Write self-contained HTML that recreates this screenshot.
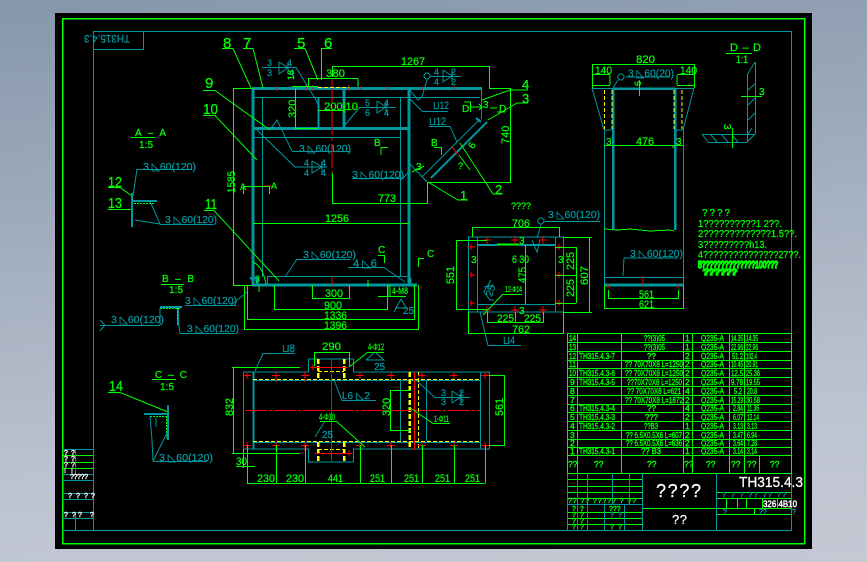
<!DOCTYPE html>
<html><head><meta charset="utf-8"><style>
html,body{margin:0;padding:0;width:867px;height:562px;overflow:hidden;background:linear-gradient(174deg,#8697ab 0%,#bcc3d0 75%,#c6c9d4 100%)}
#c{position:absolute;left:55px;top:13px;width:757px;height:536px;background:#000}
svg{position:absolute;left:0;top:0}
text{font-family:"Liberation Sans",sans-serif;font-size:11px;stroke-width:.25}
.g{fill:#0f0;stroke:#0f0}.t{fill:#00979e;stroke:#00979e}.w{fill:#fff;stroke:#fff}
.gl path,.gl line,.gl polyline{stroke:#0f0;fill:none;stroke-width:1}
.tl path{stroke:#00979e;fill:none;stroke-width:1}
.k path{stroke:#00979e;fill:none;stroke-width:3}
.r path{stroke:#f00;fill:none;stroke-width:1}
.y path{stroke:#ff0;fill:none;stroke-width:1;stroke-dasharray:4 2}
.yk path{stroke:#ff0;fill:none;stroke-width:2.5;stroke-dasharray:5 2}
.s text{font-size:8.5px;stroke-width:.4}.m text{font-size:9px}
.n{font-size:15px}
</style></head><body><div id="c"></div>
<svg width="867" height="562" viewBox="0 0 867 562" shape-rendering="crispEdges">
<g class="gl"><path d="M62.5 18.5H804.5V543.5H62.5Z" style="stroke-width:1.5"/></g>
<g class="tl"><path d="M93.5 31.5H791.5V530.5H93.5ZM93 49.5H143.5V31"/></g>
<text class="t" transform="rotate(180 107 39)" x="84" y="43" textLength="46" lengthAdjust="spacingAndGlyphs">TH315.4.3</text>

<!-- main elevation thick -->
<g class="k">
<path d="M253 88V285M409 88V285M252 88.5H482M253 128.5H409M252 285H417M344 88V128"/>
<path d="M431 178L487 122" style="stroke-width:2" shape-rendering="auto"/>
<path d="M476 118L481 122" style="stroke-width:2"/>
<path d="M318.5 97V128" style="stroke-width:2"/>
<path d="M250 278H257V285M410 278V285" style="stroke-width:2.5"/>
</g>
<g class="tl">
<path d="M253 97.5H480M262.5 97V277M253 137.5H400M400.5 97V277M267 276.5H407M267.5 276V285"/>
<path d="M481.5 88V119M422 177L480 119M410 164L427 182" shape-rendering="auto"/>
<path d="M262 67.500H296L316 100L318 105M279 62V74L288 67.500L279 62M288 62V74" shape-rendering="auto"/>
<path d="M360 107.500H396M360 107L345 125M377 101V113L386 107L377 101M386 101V113" shape-rendering="auto"/>
<path d="M430 76.500H461M427 80L422 97L418 100L410 90M443 70V82L452 76L443 70M452 70V82" shape-rendering="auto"/>
<circle cx="427" cy="76" r="3" fill="none" stroke="#00979e"/>
<path d="M422 111.500H448M422 111L408 97M429 126.500H450L457 142" shape-rendering="auto"/>
<path d="M352 178.500H403L410 170" shape-rendering="auto"/>
<path d="M292 151.500H350M292 151L277 120L270 130" shape-rendering="auto"/>
<path d="M257 130L295 167H327M312 161V173L322 167L312 161M322 161V173" shape-rendering="auto"/>
<path d="M297 259.500H350M297 259L285 277" shape-rendering="auto"/>
<path d="M348 267.500H384L405 282" shape-rendering="auto"/>
<path d="M401 299L394 312M401 299L406 308H395" shape-rendering="auto"/>
</g>
<text class="t" x="299" y="152" textLength="52" lengthAdjust="spacingAndGlyphs" style="font-size:10.500px">3 ◺60(120)</text>
<text class="t" x="352" y="178" textLength="52" lengthAdjust="spacingAndGlyphs" style="font-size:10.500px">3 ◺60(120)</text>
<text class="t" x="303" y="258" textLength="53" lengthAdjust="spacingAndGlyphs" style="font-size:10.500px">3 ◺60(120)</text>
<text class="t" x="353" y="267" textLength="24" lengthAdjust="spacingAndGlyphs">4 ◺6</text>
<text class="t" x="433" y="109" textLength="16" lengthAdjust="spacingAndGlyphs">⊔12</text>
<text class="t" x="429" y="125" textLength="17" lengthAdjust="spacingAndGlyphs">⊔12</text>
<g class="m">
<text class="t" x="267" y="66">3</text><text class="t" x="267" y="76">3</text><text class="t" x="287" y="66">4</text><text class="t" x="289" y="76">4</text>
<text class="t" x="365" y="106">5</text><text class="t" x="365" y="116">6</text><text class="t" x="384" y="106">4</text><text class="t" x="384" y="116">4</text>
<text class="t" x="434" y="75">4</text><text class="t" x="434" y="85">4</text><text class="t" x="451" y="75">2</text><text class="t" x="451" y="85">2</text>
<text class="t" x="304" y="166">4</text><text class="t" x="304" y="176">4</text><text class="t" x="321" y="166">4</text><text class="t" x="321" y="176">4</text>
</g>
<text class="t" x="403" y="314" style="font-size:10px">25</text>

<g class="r">
<path d="M332 78V173" style="stroke-dasharray:24 3 3 3"/>
<path d="M277 86V91M306 85V91M313 85V91M349 85V91M361 86V90M387 86V90M422 86V90M454 86V90"/>
<path d="M262 186H272M332 276V285M421 286V289M247 286V289M274 286V289M312 286V289M349 286V289M414 286V289"/>
<path d="M452 147L458 155" shape-rendering="auto"/>
</g>
<path d="M292 86.500H318" stroke="#0f0"/>
<g class="y"><path d="M318 87.500H349"/></g>
<text class="g n" x="223" y="48">8</text>
<text class="g n" x="243" y="48">7</text>
<text class="g n" x="297" y="48">5</text>
<text class="g n" x="324" y="48">6</text>
<text class="g n" x="205" y="88">9</text>
<text class="g n" x="203" y="114" textLength="15" lengthAdjust="spacingAndGlyphs">10</text>
<text class="g n" x="205" y="209" textLength="12" lengthAdjust="spacingAndGlyphs">11</text>
<text class="g n" x="108" y="187" textLength="14" lengthAdjust="spacingAndGlyphs">12</text>
<text class="g n" x="108" y="208" textLength="14" lengthAdjust="spacingAndGlyphs">13</text>
<text class="g n" x="109" y="391" textLength="14" lengthAdjust="spacingAndGlyphs">14</text>
<text class="g" x="522" y="89" style="font-size:13px">4</text>
<text class="g" x="522" y="103" style="font-size:13px">3</text>
<text class="g" x="495" y="194" style="font-size:13px">2</text>
<text class="g" x="460" y="200" style="font-size:13px">1</text>
<g class="gl">
<path d="M222 48.500H233L251 88M243 48.500H253L263 88M294 48.500H305L318 80M322 48.500H332M321.500 48V80M203 90.500H215L270 130M203 115.500H215L257 160M204 210.500H214L279 281M108 187.500H120L132 196M108 209.500H132M108 392.500H120L168 412" shape-rendering="auto"/>
<path d="M482 100L510 90H528M488 120L517 103H528M460 143L493 194H503M428 182L458 200H468" shape-rendering="auto"/>
<path d="M233.500 88V285M233 88.500H253M233 285.500H252M295.500 88V128M295 128.500H318M318 110.500H344"/>
<path d="M308.500 78V87M308 78.500H358V87M332.500 66V77M332 66.500H489.500V88M510.500 88V182M489 88.500H511M427 182.500H511"/>
<path d="M332.500 173V204M332 203.500H427.500M427.500 183V204M253 223.500H409"/>
<path d="M312.500 285V298M312 298.500H349.500V285M274.500 285V309M274 309.500H387.500V285M247.500 285V319M247 319.500H414.500V285M244.500 285V329M244 329.500H418.500V285"/>
<path d="M243 186.500H270M243.500 187V194M269.500 187V194M470 107H482M470.500 102V112M479 104L482 107L479 110" />
<path d="M388 285V297M390 285V297M378 296.500H406M368 280V287"/>
<path d="M381 147V155M381 147.500H388M434 147.500H441M441.500 147V155M378 255.500H384M384.500 255V263M424 258.500H418M418.500 258V267"/>
<path d="M253 262C260 265 265 275 266 285M259 285V292M471 102H464M497 112H505M497 108H490" shape-rendering="auto"/>
<path d="M459 155L470 170M412 172L424 166" shape-rendering="auto"/>
</g>
<text class="g" transform="rotate(-90 231 182)" x="220" y="186" textLength="22" lengthAdjust="spacingAndGlyphs">1585</text>
<text class="g" transform="rotate(-90 292 108)" x="282" y="112" style="font-size:11px">320</text>
<text class="g" transform="rotate(-90 291 75)" x="286" y="78" style="font-size:9px">18</text>
<text class="g" x="326" y="77" textLength="19" lengthAdjust="spacingAndGlyphs">380</text>
<text class="g" x="324" y="110" textLength="34" lengthAdjust="spacingAndGlyphs">200|10</text>
<text class="g" x="401" y="65" textLength="24" lengthAdjust="spacingAndGlyphs">1267</text>
<text class="g" transform="rotate(-90 505 134)" x="495" y="138">740</text>
<text class="g" x="378" y="202" textLength="18" lengthAdjust="spacingAndGlyphs">773</text>
<text class="g" x="325" y="222" textLength="24" lengthAdjust="spacingAndGlyphs">1256</text>
<text class="g" x="325" y="297" textLength="18" lengthAdjust="spacingAndGlyphs">300</text>
<text class="g" x="324" y="309" textLength="18" lengthAdjust="spacingAndGlyphs">900</text>
<text class="g" x="324" y="319" textLength="23" lengthAdjust="spacingAndGlyphs">1336</text>
<text class="g" x="324" y="329" textLength="23" lengthAdjust="spacingAndGlyphs">1396</text>
<text class="g" x="392" y="294" textLength="16" lengthAdjust="spacingAndGlyphs" style="font-size:9px">4-M8</text>
<text class="g" x="240" y="190" style="font-size:9px">A</text><text class="g" x="271" y="189" style="font-size:9px">A</text>
<text class="g" x="374" y="146" style="font-size:10px">B</text><text class="g" x="431" y="146" style="font-size:10px">B</text>
<text class="g" x="378" y="253" style="font-size:10px">C</text><text class="g" x="427" y="257" style="font-size:10px">C</text>
<text class="g" x="462" y="112" style="font-size:10px">D</text><text class="g" x="499" y="112" style="font-size:10px">D</text>
<text class="g" x="483" y="108" style="font-size:10px">3</text><text class="g" x="416" y="170" style="font-size:10px">3</text>
<text class="g" transform="rotate(-60 472 144)" x="468" y="148" style="font-size:10px">6</text>
<text class="g" x="458" y="169" style="font-size:9px">?</text>
<text class="g" x="255" y="282" style="font-size:9px">3</text>

<!-- right view -->
<g class="k">
<path d="M613 88.500H675M613 88V230M675 88V230" style="stroke-width:2.5"/>
<path d="M604 285H683" />
</g>
<g class="tl">
<path d="M592 88.500H694M604.500 130V285M683.500 130V285M604 130H613M675 130H683M604 277.500H683"/>
<path d="M592 88L604 130M694 88L683 130M626 77H670M618 80L613 88M624 258H678M624 258L623 276" shape-rendering="auto"/>
<circle cx="621" cy="77" r="3" fill="none" stroke="#00979e"/>
<path d="M755.500 62V134M747.500 75V142M747 75L755 62M702 134.500H755M708 142.500H747M702 134L708 142M747 142L755 134M748 90L755 84M748 105L755 98M748 120L755 113M711 135L717 142M722 135L728 142M732 135L738 142M748 134L752 128" shape-rendering="auto"/>
</g>
<g class="y"><path d="M604.500 90V129M612 90V129M674 90V129M682 90V129"/></g>
<path d="M604 229L618 230L630 229L650 231L670 230L674 231" fill="none" stroke="#0f0"/>
<path d="M643 276V285M608 284V288M678 284V288" stroke="#f00"/>
<g class="gl">
<path d="M592.500 64V88M592 64.500H694.500V88M592.500 74.500H610M610 75V85M592 85.500H610M677 75V85M677 85.500H694M677.500 74.500H694"/>
<path d="M604 145.500H683M608.500 290V299M608 298.500H678.500V290M604.500 285V308M604 308.500H683.500V285"/>
<path d="M639.500 80V96M741 96.500H762M732.500 128V148"/>
<path d="M726 53.500H752"/>
<path d="M673 145V148"/>
</g>
<text class="g" x="636" y="63" textLength="19" lengthAdjust="spacingAndGlyphs">820</text>
<text class="g" x="595" y="74" textLength="17" lengthAdjust="spacingAndGlyphs">140</text>
<text class="g" x="680" y="74" textLength="17" lengthAdjust="spacingAndGlyphs">140</text>
<text class="g" x="636" y="145" textLength="18" lengthAdjust="spacingAndGlyphs">476</text>
<text class="g" x="606" y="145" style="font-size:10px">3</text>
<text class="g" x="676" y="145" style="font-size:10px">3</text>
<text class="g" x="639" y="298" textLength="15" lengthAdjust="spacingAndGlyphs">561</text>
<text class="g" x="639" y="308" textLength="15" lengthAdjust="spacingAndGlyphs">621</text>
<text class="t" x="628" y="77" textLength="46" lengthAdjust="spacingAndGlyphs">3 ◺60(20)</text>
<text class="t" x="630" y="257" textLength="53" lengthAdjust="spacingAndGlyphs" style="font-size:10.500px">3 ◺60(120)</text>
<text class="g" transform="rotate(-90 637 82)" x="633" y="86" style="font-size:9px">6</text>
<text class="g" x="730" y="51" textLength="31" lengthAdjust="spacing">D – D</text>
<text class="g" x="736" y="63" textLength="12" lengthAdjust="spacingAndGlyphs">1:1</text>
<text class="g" x="759" y="95" style="font-size:10px">3</text>
<text class="g" transform="rotate(90 727 128)" x="723" y="131" style="font-size:10px">3</text>

<!-- notes -->
<text class="g" x="702" y="216" textLength="28" lengthAdjust="spacing" style="font-size:10px">????</text>
<text class="g" x="698" y="227" textLength="84" lengthAdjust="spacingAndGlyphs" style="font-size:10px">1??????????1 2??.</text>
<text class="g" x="698" y="237" textLength="99" lengthAdjust="spacingAndGlyphs" style="font-size:10px">2?????????????1.5??.</text>
<text class="g" x="698" y="248" textLength="69" lengthAdjust="spacingAndGlyphs" style="font-size:10px">3?????????h13.</text>
<text class="g" x="698" y="258" textLength="103" lengthAdjust="spacingAndGlyphs" style="font-size:10px">4???????????????27??.</text>
<text class="g" x="698" y="268" textLength="80" lengthAdjust="spacingAndGlyphs" style="font-size:10px;stroke-width:1.6">5??????????????100???</text>
<text class="g" x="703" y="275" textLength="34" lengthAdjust="spacingAndGlyphs" style="font-size:8px;stroke-width:1.6">??????</text>

<!-- plan -->
<g class="tl">
<path d="M468.500 237H563.500V312H468.500ZM477.500 237V312M555.500 237V312M477 304.500H555"/>
<path d="M532 240L537 252L540 240M541 225L537 238M545 221.500H600M480 312L488 345.500H521" shape-rendering="auto"/>
<circle cx="541" cy="221" r="3" fill="none" stroke="#00979e"/>
<path d="M491 280L484 292L490 300H494M484 287L494 285" shape-rendering="auto"/>
</g>
<g class="k"><path d="M477 245H497M519 245H555" style="stroke-width:2"/></g>
<path d="M497 244.500H519" stroke="#0f0" stroke-width="2"/>
<g class="r">
<path d="M483 240H491M487 236V244M511 240H519M515 236V244M539 240H547M543 236V244M467 247H475M471 244V250M467 275H475M471 272V278M467 303H475M471 300V306M555 247H563M559 244V250M555 275H563M559 272V278M555 303H563M559 300V306M483 310H491M487 306V314M511 310H519M515 306V314M539 310H547M543 306V314"/>
</g>
<g class="gl">
<path d="M472.500 227V237M472 227.500H559.500V237M468.500 312V333M468 333.500H563.500V312M487.500 312V322M487 322.500H543.500V312M515.500 312V322"/>
<path d="M456.500 240V309M456 240.500H487M456 309.500H487M589.500 237V312M563 237.500H592M563 312.500H592M576.500 247V303M555 247.500H576M555 275.500H576M555 303.500H576M525.500 245V304"/>
<path d="M503 294.500H522M503 294L483 315" shape-rendering="auto"/>
</g>
<text class="g" x="511" y="209" textLength="20" lengthAdjust="spacing" style="font-size:9px">????</text>
<text class="g" x="512" y="227" textLength="18" lengthAdjust="spacingAndGlyphs">706</text>
<text class="g" x="512" y="333" textLength="18" lengthAdjust="spacingAndGlyphs">762</text>
<text class="g" x="497" y="322" textLength="17" lengthAdjust="spacingAndGlyphs">225</text>
<text class="g" x="524" y="322" textLength="17" lengthAdjust="spacingAndGlyphs">225</text>
<text class="g" x="512" y="263" textLength="17" lengthAdjust="spacingAndGlyphs">6 30</text>
<text class="g" transform="rotate(-90 522 275)" x="514" y="279" textLength="16" lengthAdjust="spacingAndGlyphs">475</text>
<text class="g" transform="rotate(-90 450 275)" x="441" y="279" textLength="18" lengthAdjust="spacingAndGlyphs">551</text>
<text class="g" transform="rotate(-90 584 275)" x="574" y="279" textLength="19" lengthAdjust="spacingAndGlyphs">607</text>
<text class="g" transform="rotate(-90 570 261)" x="561" y="265" textLength="18" lengthAdjust="spacingAndGlyphs">225</text>
<text class="g" transform="rotate(-90 570 288)" x="561" y="292" textLength="18" lengthAdjust="spacingAndGlyphs">225</text>
<text class="g" x="471" y="263" style="font-size:10px">3</text><text class="g" x="558" y="263" style="font-size:10px">3</text>
<text class="g" x="519" y="244" style="font-size:10px">3</text><text class="g" x="519" y="314" style="font-size:10px">3</text>
<text class="g" x="505" y="292" textLength="17" lengthAdjust="spacingAndGlyphs" style="font-size:8px">12-Φ14</text>
<text class="t" x="548" y="218" textLength="52" lengthAdjust="spacingAndGlyphs" style="font-size:10.500px">3 ◺60(120)</text>
<text class="t" transform="rotate(-70 490 290)" x="484" y="294" style="font-size:10px">25</text>
<text class="t" x="503" y="344" textLength="12" lengthAdjust="spacingAndGlyphs">⊔4</text>

<!-- sections -->
<text class="g" x="135" y="136" textLength="31" lengthAdjust="spacing" style="font-size:10px">A – A</text>
<path d="M131 137.500H155" stroke="#0f0"/>
<text class="g" x="139" y="148" textLength="14" lengthAdjust="spacing" style="font-size:10px">1:5</text>
<g class="k"><path d="M132 193V227" style="stroke-width:2"/><path d="M132 201H157" style="stroke-width:2"/></g>
<path d="M134 203.500H155" stroke="#0f0" stroke-dasharray="2 1"/>
<g class="tl"><path d="M137 169.500H192M137 169L133 196M135 220L160 224M150 201L160 224M160 224.500H213" shape-rendering="auto"/></g>
<text class="t" x="143" y="170" textLength="53" lengthAdjust="spacingAndGlyphs" style="font-size:10.500px">3 ◺60(120)</text>
<text class="t" x="165" y="223" textLength="52" lengthAdjust="spacingAndGlyphs" style="font-size:10.500px">3 ◺60(120)</text>
<text class="g" x="162" y="282" textLength="32" lengthAdjust="spacing" style="font-size:10px">B – B</text>
<path d="M161 284.500H184" stroke="#0f0"/>
<text class="g" x="169" y="293" textLength="14" lengthAdjust="spacing" style="font-size:10px">1:5</text>
<g class="k"><path d="M160 307H182M178 307V325" style="stroke-width:2"/></g>
<path d="M160 308.500H180M177.500 308V325" stroke="#0f0" stroke-dasharray="2 1"/>
<g class="tl"><path d="M185 305.500H236M247 292L230 306M100 325.500H160M160 325L160 308M180 333.500H235M180 333L178 320M100 320L105 325L100 331" shape-rendering="auto"/></g>
<text class="t" x="185" y="304" textLength="52" lengthAdjust="spacingAndGlyphs" style="font-size:10.500px">3 ◺60(120)</text>
<text class="t" x="111" y="323" textLength="53" lengthAdjust="spacingAndGlyphs" style="font-size:10.500px">3 ◺60(120)</text>
<text class="t" x="187" y="332" textLength="52" lengthAdjust="spacingAndGlyphs" style="font-size:10.500px">3 ◺60(120)</text>
<text class="g" x="155" y="378" textLength="32" lengthAdjust="spacing" style="font-size:10px">C – C</text>
<path d="M152 379.500H176" stroke="#0f0"/>
<text class="g" x="160" y="390" textLength="14" lengthAdjust="spacing" style="font-size:10px">1:5</text>
<g class="k"><path d="M168 405V440M144 414H168" style="stroke-width:2"/></g>
<path d="M150 416.500H166M166.500 416V438" stroke="#0f0" stroke-dasharray="2 1"/>
<g class="tl"><path d="M150 416L152 440L153 461M153 461L168 431M153 461.500H207M156 418V427" shape-rendering="auto"/></g>
<text class="t" x="159" y="461" textLength="54" lengthAdjust="spacingAndGlyphs" style="font-size:10.500px">3 ◺60(120)</text>

<!-- bottom plan -->
<g class="tl">
<path d="M243.500 372H308.500V359H353.500V372H489.500V449H353.500V462H308.500V449H243.500ZM253 380.500H480M253 442.500H480M480.500 372V449M400.500 380V441M426.500 380V441"/>
<path d="M255 371L263 353.500H295M334 380L342 400.500H376M416 380L435 397.500H470M375 352L366 360M375 352L384 360H366M325 421L315 437" shape-rendering="auto"/>
<path d="M452 391V403L461 397L452 391M461 391V403" shape-rendering="auto"/>
</g>
<path d="M253.500 372V449" stroke="#00979e" stroke-width="2"/>
<g class="y"><path d="M253 379.500H480M253 441.500H480M318 371.500H344M318 449.500H344M418.500 372V449"/></g>
<g class="yk"><path d="M318 359V378M318 442V462M344 359V378M344 442V462M409.500 372V449"/></g>
<g class="r">
<path d="M245 410.500H480" style="stroke-dasharray:22 2 3 2"/>
<path d="M331.500 359V462M414.500 372V450" />
<path d="M315 367.500H348M315 453.500H348"/>
<path d="M243 375.500H251M247 372V379M272 375.500H280M276 371V382M301 375.500H309M305 371V382M356 375.500H364M360 372V379M387 375.500H395M391 372V379M418 375.500H426M422 372V379M450 375.500H458M454 372V379M481 375.500H489M485 372V379"/>
<path d="M243 445.500H251M247 442V449M272 445.500H280M276 442V451M301 445.500H309M305 442V451M356 445.500H364M360 442V449M387 445.500H395M391 442V449M418 445.500H426M422 442V449M450 445.500H458M454 442V449M481 445.500H489M485 442V449"/>
<path d="M313 364V370M310 367.500H316M349 450V456M346 453.500H352"/>
</g>
<g class="gl">
<path d="M233.500 367V453M232 367.500H300M232 453.500H300M314.500 352V366M314 352.500H349.500V366M489 375.500H504.500V445.500H489M390.500 390V430M390 390.500H411M390 430.500H411"/>
<path d="M247.500 445V483M247 483.500H485.500M276.500 445V483M305.500 445V483M360.500 445V483M391.500 445V483M422.500 445V483M454.500 445V483M485.500 445V483M236 466.500H255M243.500 449V468"/>
<path d="M349 367L368 352M368 352.500H384M409 407L433 423.500H450M336 421L365 447M320 421.500H336" shape-rendering="auto"/>
</g>
<text class="t" x="282" y="352" textLength="13" lengthAdjust="spacingAndGlyphs">⊔8</text>
<text class="g" x="322" y="350" textLength="19" lengthAdjust="spacingAndGlyphs">290</text>
<text class="g" x="368" y="350" textLength="16" lengthAdjust="spacingAndGlyphs" style="font-size:9px">4-Φ12</text>
<text class="t" x="374" y="370" style="font-size:10px">25</text>
<text class="t" x="342" y="399" textLength="11" lengthAdjust="spacingAndGlyphs" style="font-size:10px">L6</text>
<text class="t" x="356" y="399" textLength="14" lengthAdjust="spacingAndGlyphs" style="font-size:10px">◺2</text>
<g class="m"><text class="t" x="441" y="396">3</text><text class="t" x="441" y="405">3</text><text class="t" x="459" y="396">2</text><text class="t" x="459" y="405">2</text></g>
<text class="g" x="434" y="422" textLength="15" lengthAdjust="spacingAndGlyphs" style="font-size:9px">1-Φ11</text>
<text class="g" x="319" y="420" textLength="16" lengthAdjust="spacingAndGlyphs" style="font-size:9px">4-Φ10</text>
<text class="t" x="322" y="438" style="font-size:10px">25</text>
<text class="g" transform="rotate(-90 229 407)" x="220" y="411" textLength="18" lengthAdjust="spacingAndGlyphs">832</text>
<text class="g" transform="rotate(-90 386 407)" x="377" y="411" textLength="18" lengthAdjust="spacingAndGlyphs">320</text>
<text class="g" transform="rotate(-90 499 407)" x="490" y="411" textLength="18" lengthAdjust="spacingAndGlyphs">561</text>
<text class="g" x="236" y="465" textLength="11" lengthAdjust="spacingAndGlyphs">30</text>
<text class="g" x="257" y="482" textLength="18" lengthAdjust="spacingAndGlyphs">230</text>
<text class="g" x="286" y="482" textLength="18" lengthAdjust="spacingAndGlyphs">230</text>
<text class="g" x="328" y="482" textLength="15" lengthAdjust="spacingAndGlyphs">441</text>
<text class="g" x="370" y="482" textLength="15" lengthAdjust="spacingAndGlyphs">251</text>
<text class="g" x="404" y="482" textLength="15" lengthAdjust="spacingAndGlyphs">251</text>
<text class="g" x="435" y="482" textLength="15" lengthAdjust="spacingAndGlyphs">251</text>
<text class="g" x="465" y="482" textLength="15" lengthAdjust="spacingAndGlyphs">251</text>

<!-- parts table -->
<g class="gl">
<path d="M567.500 333.500H791.500V473.500H567.500ZM567 342.500H791M567 351.500H791M567 360.500H791M567 368.500H791M567 377.500H791M567 386.500H791M567 395.500H791M567 404.500H791M567 412.500H791M567 421.500H791M567 430.500H791M567 439.500H791M567 447.500H791M567 455.500H791"/>
<path d="M577.500 333V473M621.500 333V473M683.500 333V473M692.500 333V473M729.500 333V473M744.500 333V473M759.500 455V473"/>
</g>
<g class="s">
<text class="g" x="569" y="341" textLength="7" lengthAdjust="spacingAndGlyphs">14</text><text class="g" x="569" y="350" textLength="7" lengthAdjust="spacingAndGlyphs">13</text><text class="g" x="569" y="359" textLength="7" lengthAdjust="spacingAndGlyphs">12</text><text class="g" x="569" y="367" textLength="7" lengthAdjust="spacingAndGlyphs">11</text><text class="g" x="569" y="376" textLength="7" lengthAdjust="spacingAndGlyphs">10</text><text class="g" x="570" y="385">9</text><text class="g" x="570" y="394">8</text><text class="g" x="570" y="403">7</text><text class="g" x="570" y="411">6</text><text class="g" x="570" y="420">5</text><text class="g" x="570" y="429">4</text><text class="g" x="570" y="438">3</text><text class="g" x="570" y="446">2</text><text class="g" x="570" y="454">1</text>
<text class="g" x="579" y="359" textLength="36" lengthAdjust="spacingAndGlyphs">TH315.4.3-7</text><text class="g" x="579" y="376" textLength="36" lengthAdjust="spacingAndGlyphs">TH315.4.3-6</text><text class="g" x="579" y="385" textLength="36" lengthAdjust="spacingAndGlyphs">TH315.4.3-5</text><text class="g" x="579" y="411" textLength="36" lengthAdjust="spacingAndGlyphs">TH315.4.3-4</text><text class="g" x="579" y="420" textLength="36" lengthAdjust="spacingAndGlyphs">TH315.4.3-3</text><text class="g" x="579" y="429" textLength="36" lengthAdjust="spacingAndGlyphs">TH315.4.3-2</text><text class="g" x="579" y="454" textLength="36" lengthAdjust="spacingAndGlyphs">TH315.4.3-1</text>
<text class="g" x="644" y="341" textLength="21" lengthAdjust="spacingAndGlyphs">??(3)05</text><text class="g" x="644" y="350" textLength="21" lengthAdjust="spacingAndGlyphs">??(3)05</text><text class="g" x="647" y="359" textLength="9" lengthAdjust="spacingAndGlyphs">??</text>
<text class="g" x="625" y="367" textLength="58" lengthAdjust="spacingAndGlyphs">?? 70X70X8 L=1250</text><text class="g" x="625" y="376" textLength="58" lengthAdjust="spacingAndGlyphs">?? 70X70X8 L=1250</text><text class="g" x="627" y="385" textLength="55" lengthAdjust="spacingAndGlyphs">??70X70X8 L=1250</text><text class="g" x="627" y="394" textLength="54" lengthAdjust="spacingAndGlyphs">?? 70X70X8 L=621</text><text class="g" x="625" y="403" textLength="58" lengthAdjust="spacingAndGlyphs">?? 70X70X8 L=1872</text>
<text class="g" x="647" y="411" textLength="9" lengthAdjust="spacingAndGlyphs">??</text><text class="g" x="645" y="420" textLength="13" lengthAdjust="spacingAndGlyphs">???</text><text class="g" x="644" y="429" textLength="14" lengthAdjust="spacingAndGlyphs">??B3</text>
<text class="g" x="626" y="438" textLength="56" lengthAdjust="spacingAndGlyphs">?? 6.5X0.5X6 L=607</text><text class="g" x="626" y="446" textLength="56" lengthAdjust="spacingAndGlyphs">?? 6.5X0.5X6 L=636</text><text class="g" x="641" y="454" textLength="20" lengthAdjust="spacingAndGlyphs">?? B3</text>
<text class="g" x="685" y="341">1</text><text class="g" x="685" y="350">1</text><text class="g" x="685" y="359">2</text><text class="g" x="685" y="367">2</text><text class="g" x="685" y="376">2</text><text class="g" x="685" y="385">2</text><text class="g" x="685" y="394">4</text><text class="g" x="685" y="403">2</text><text class="g" x="685" y="411">4</text><text class="g" x="685" y="420">2</text><text class="g" x="685" y="429">1</text><text class="g" x="685" y="438">2</text><text class="g" x="685" y="446">2</text><text class="g" x="685" y="454">1</text>
<text class="g" x="701" y="341" textLength="23" lengthAdjust="spacingAndGlyphs">Q235-A</text><text class="g" x="701" y="350" textLength="23" lengthAdjust="spacingAndGlyphs">Q235-A</text><text class="g" x="701" y="359" textLength="23" lengthAdjust="spacingAndGlyphs">Q235-A</text><text class="g" x="701" y="367" textLength="23" lengthAdjust="spacingAndGlyphs">Q235-A</text><text class="g" x="701" y="376" textLength="23" lengthAdjust="spacingAndGlyphs">Q235-A</text><text class="g" x="701" y="385" textLength="23" lengthAdjust="spacingAndGlyphs">Q235-A</text><text class="g" x="701" y="394" textLength="23" lengthAdjust="spacingAndGlyphs">Q235-A</text><text class="g" x="701" y="403" textLength="23" lengthAdjust="spacingAndGlyphs">Q235-A</text><text class="g" x="701" y="411" textLength="23" lengthAdjust="spacingAndGlyphs">Q235-A</text><text class="g" x="701" y="420" textLength="23" lengthAdjust="spacingAndGlyphs">Q235-A</text><text class="g" x="701" y="429" textLength="23" lengthAdjust="spacingAndGlyphs">Q235-A</text><text class="g" x="701" y="438" textLength="23" lengthAdjust="spacingAndGlyphs">Q235-A</text><text class="g" x="701" y="446" textLength="23" lengthAdjust="spacingAndGlyphs">Q235-A</text><text class="g" x="701" y="454" textLength="23" lengthAdjust="spacingAndGlyphs">Q235-A</text>
<text class="g" x="731" y="341" textLength="12" lengthAdjust="spacingAndGlyphs">14.35</text><text class="g" x="731" y="350" textLength="12" lengthAdjust="spacingAndGlyphs">22.96</text><text class="g" x="732" y="359" textLength="11" lengthAdjust="spacingAndGlyphs">51.2</text><text class="g" x="731" y="367" textLength="12" lengthAdjust="spacingAndGlyphs">10.45</text><text class="g" x="731" y="376" textLength="12" lengthAdjust="spacingAndGlyphs">12.5</text><text class="g" x="731" y="385" textLength="12" lengthAdjust="spacingAndGlyphs">9.78</text><text class="g" x="734" y="394" textLength="8" lengthAdjust="spacingAndGlyphs">5.2</text><text class="g" x="731" y="403" textLength="12" lengthAdjust="spacingAndGlyphs">15.29</text><text class="g" x="733" y="411" textLength="10" lengthAdjust="spacingAndGlyphs">2.84</text><text class="g" x="733" y="420" textLength="10" lengthAdjust="spacingAndGlyphs">6.07</text><text class="g" x="733" y="429" textLength="10" lengthAdjust="spacingAndGlyphs">3.13</text><text class="g" x="733" y="438" textLength="10" lengthAdjust="spacingAndGlyphs">3.47</text><text class="g" x="733" y="446" textLength="10" lengthAdjust="spacingAndGlyphs">3.64</text><text class="g" x="733" y="454" textLength="10" lengthAdjust="spacingAndGlyphs">3.14</text>
<text class="g" x="746" y="341" textLength="12" lengthAdjust="spacingAndGlyphs">14.35</text><text class="g" x="746" y="350" textLength="12" lengthAdjust="spacingAndGlyphs">22.96</text><text class="g" x="746" y="359" textLength="11" lengthAdjust="spacingAndGlyphs">102.4</text><text class="g" x="746" y="367" textLength="12" lengthAdjust="spacingAndGlyphs">20.91</text><text class="g" x="746" y="376" textLength="14" lengthAdjust="spacingAndGlyphs">25.36</text><text class="g" x="746" y="385" textLength="14" lengthAdjust="spacingAndGlyphs">19.55</text><text class="g" x="747" y="394" textLength="10" lengthAdjust="spacingAndGlyphs">20.8</text><text class="g" x="746" y="403" textLength="14" lengthAdjust="spacingAndGlyphs">30.58</text><text class="g" x="747" y="411" textLength="12" lengthAdjust="spacingAndGlyphs">11.36</text><text class="g" x="747" y="420" textLength="12" lengthAdjust="spacingAndGlyphs">12.14</text><text class="g" x="747" y="429" textLength="10" lengthAdjust="spacingAndGlyphs">3.13</text><text class="g" x="747" y="438" textLength="10" lengthAdjust="spacingAndGlyphs">6.94</text><text class="g" x="747" y="446" textLength="10" lengthAdjust="spacingAndGlyphs">7.28</text><text class="g" x="747" y="454" textLength="10" lengthAdjust="spacingAndGlyphs">3.14</text>
<text class="g" x="568" y="467">??</text><text class="g" x="594" y="467">??</text><text class="g" x="647" y="467">??</text><text class="g" x="684" y="467">??</text><text class="g" x="706" y="467">??</text><text class="g" x="731" y="467">??</text><text class="g" x="747" y="467">??</text><text class="g" x="770" y="467">??</text>
</g>

<!-- title block -->
<g class="gl">
<path d="M567 479.500H642M567 486.500H642M567 492.500H642M567 498.500H642M567 512.500H642M567 518.500H642M567 524.500H642M642 508.500H716M716 492.500H791M716 498.500H791M716 508.500H791M716 514.500H791M726.500 498V508M737.500 498V508M746.500 498V508M762.500 498V508M777.500 498V508M754.500 508V514"/>
<path d="M62 455.500H93M62 462.500H93M62 468.500H93" />
</g>
<g class="tl">
<path d="M567.500 473V530M577.500 473V530M587.500 473V530M612.500 473V504M629.500 473V504M604.500 504V530M624.500 504V530M642.500 473V530M716.500 473V530M567 504.500H642M93 530.500H791"/>
<path d="M62 449.500H93M62 474.500H93M62 480.500H93M62 493.500H93M62 499.500H93M62 512.500H93M62 518.500H93M75.500 449V474M75.500 512V530M62 530.500H93"/>
</g>
<text class="w" x="656" y="497" textLength="45" lengthAdjust="spacing" style="font-size:18px">????</text>
<text class="w" x="672" y="524" textLength="15" lengthAdjust="spacing" style="font-size:13px">??</text>
<text class="w" x="739" y="487" textLength="64" lengthAdjust="spacingAndGlyphs" style="font-size:14.500px">TH315.4.3</text>
<text class="w" x="763" y="507" textLength="34" lengthAdjust="spacingAndGlyphs" style="font-size:9px;stroke-width:.5">326 4B10</text>
<g class="s">
<text class="t" x="722" y="497" textLength="64" lengthAdjust="spacing" style="font-size:7px">? ? ? ?? ?? ??</text>
<text class="t" x="723" y="514" style="font-size:7px">?</text><text class="t" x="759" y="514" style="font-size:7px">??</text><text class="t" x="792" y="514" style="font-size:7px">?</text>
<text class="g" x="568" y="503" textLength="68" lengthAdjust="spacing" style="font-size:7px">?? ?? ????? ? ??</text>
<text class="g" x="572" y="511" style="font-size:7px">?</text><text class="g" x="580" y="511" style="font-size:7px">?</text><text class="g" x="609" y="511" style="font-size:7px">???</text>
<text class="g" x="572" y="517" style="font-size:7px">?</text><text class="g" x="580" y="517" style="font-size:7px">?</text><text class="t" x="610" y="517" style="font-size:7px">?</text><text class="t" x="618" y="517" style="font-size:7px">?</text>
<text class="g" x="572" y="523" style="font-size:7px">?</text><text class="g" x="580" y="523" style="font-size:7px">?</text>
<text class="g" x="572" y="529" style="font-size:7px">?</text><text class="g" x="580" y="529" style="font-size:7px">?</text><text class="g" x="610" y="529" style="font-size:7px">?</text><text class="g" x="618" y="529" style="font-size:7px">?</text>
</g>
<g class="s">
<text class="w" x="64" y="455" style="font-size:7px">?</text><text class="w" x="71" y="455" style="font-size:7px">?</text>
<text class="w" x="64" y="461" style="font-size:7px">?</text><text class="w" x="71" y="461" style="font-size:7px">?</text>
<text class="w" x="64" y="467" style="font-size:7px">?</text><text class="w" x="71" y="467" style="font-size:7px">?</text>
<text class="w" x="64" y="473" style="font-size:7px">!</text><text class="w" x="71" y="473" style="font-size:7px">!</text>
<text class="w" x="70" y="479" textLength="18" lengthAdjust="spacing" style="font-size:7px">?????</text>
<text class="w" x="68" y="498" style="font-size:7px">?</text><text class="w" x="76" y="498" style="font-size:7px">?</text><text class="w" x="84" y="498" style="font-size:7px">?</text><text class="w" x="91" y="498" style="font-size:7px">?</text>
<text class="w" x="64" y="517" style="font-size:7px">?</text><text class="w" x="72" y="517" style="font-size:7px">?</text><text class="w" x="78" y="517" style="font-size:7px">?</text><text class="w" x="90" y="517" style="font-size:7px">?</text>
</g>
</svg>
</body></html>
